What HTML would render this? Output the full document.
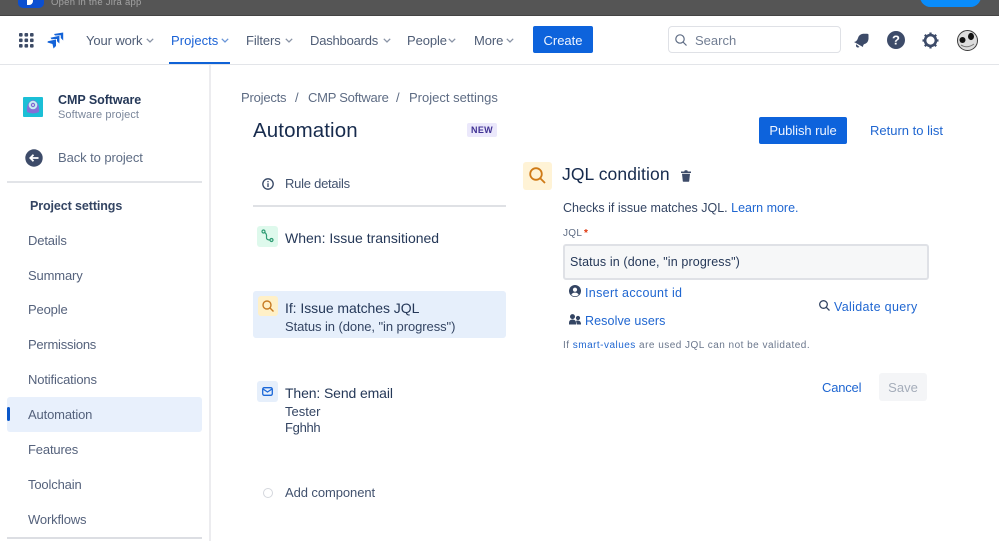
<!DOCTYPE html>
<html lang="en">
<head>
<meta charset="utf-8">
<style>
html,body{margin:0;padding:0;background:#fff}
body{width:999px;height:541px;overflow:hidden;position:relative;font-family:"Liberation Sans",sans-serif;color:#42526e}
.t{position:absolute;white-space:nowrap;line-height:20px;font-size:13px;letter-spacing:0}
.b{position:absolute}
.nav{color:#4f5d76;font-size:13px;letter-spacing:-.1px;top:31px}
.side{color:#55627c;left:28px;font-size:13px;letter-spacing:-.15px}
.link{color:#1f66d1}
svg{position:absolute;overflow:visible}
</style>
</head>
<body>
<!-- top banner -->
<div class="b" style="left:0;top:0;width:999px;height:15px;background:#555555;border-bottom:1px solid #444"></div>
<div class="b" style="left:18px;top:-12px;width:26px;height:20px;background:#0b4fd0;border-radius:5px"></div>
<div class="b" style="left:27px;top:-4px;width:6px;height:9px;background:#fff;border-radius:0 0 4px 0"></div>
<div class="t" style="left:51px;top:-7px;font-size:9.5px;color:#a3a3a3;letter-spacing:.25px">Open in the Jira app</div>
<div class="b" style="left:920px;top:-14px;width:61px;height:21px;background:#0a8cfa;border-radius:11px"></div>

<!-- header -->
<div class="b" style="left:0;top:64px;width:999px;height:1px;background:#e3e5e9"></div>
<svg style="left:19px;top:33px" width="15" height="15" fill="#3d4b66">
<rect x="0" y="0" width="3.6" height="3.6" rx="1"/><rect x="5.5" y="0" width="3.6" height="3.6" rx="1"/><rect x="11" y="0" width="3.6" height="3.6" rx="1"/>
<rect x="0" y="5.5" width="3.6" height="3.6" rx="1"/><rect x="5.5" y="5.5" width="3.6" height="3.6" rx="1"/><rect x="11" y="5.5" width="3.6" height="3.6" rx="1"/>
<rect x="0" y="11" width="3.6" height="3.6" rx="1"/><rect x="5.5" y="11" width="3.6" height="3.6" rx="1"/><rect x="11" y="11" width="3.6" height="3.6" rx="1"/>
</svg>
<svg style="left:47px;top:32px" width="17" height="17" viewBox="0 0 17 17" fill="#1463d8">
<path d="M16.200 .5V8.500L13.800 6V3.300L8 3.500 7 2 Z"/>
<path d="M12.400 3.800V11.500L10 9.200V7L4.500 7.200 3.500 5.800Z"/>
<path d="M9 7.500V14L6.500 16.500 5.500 12 .5 10.500 .8 9.300Z"/>
</svg>
<div class="t nav" style="left:86px">Your work</div>
<svg style="left:146px;top:38px" width="8" height="5" fill="none" stroke="#8a94a6" stroke-width="1.3"><path d="M.8 .8 4 4 7.2 .8"/></svg>
<div class="t nav" style="left:171px;color:#1a62d6;letter-spacing:.05px">Projects</div>
<svg style="left:221px;top:38px" width="8" height="5" fill="none" stroke="#6a96d8" stroke-width="1.3"><path d="M.8 .8 4 4 7.2 .8"/></svg>
<div class="b" style="left:169px;top:62px;width:61px;height:2px;background:#0f62d6"></div>
<div class="t nav" style="left:246px">Filters</div>
<svg style="left:285px;top:38px" width="8" height="5" fill="none" stroke="#8a94a6" stroke-width="1.3"><path d="M.8 .8 4 4 7.2 .8"/></svg>
<div class="t nav" style="left:310px;letter-spacing:-.2px">Dashboards</div>
<svg style="left:383px;top:38px" width="8" height="5" fill="none" stroke="#8a94a6" stroke-width="1.3"><path d="M.8 .8 4 4 7.2 .8"/></svg>
<div class="t nav" style="left:407px">People</div>
<svg style="left:448px;top:38px" width="8" height="5" fill="none" stroke="#8a94a6" stroke-width="1.3"><path d="M.8 .8 4 4 7.2 .8"/></svg>
<div class="t nav" style="left:474px">More</div>
<svg style="left:506px;top:38px" width="8" height="5" fill="none" stroke="#8a94a6" stroke-width="1.3"><path d="M.8 .8 4 4 7.2 .8"/></svg>
<div class="b" style="left:533px;top:26px;width:60px;height:27px;background:#0d63dc;border-radius:2px"></div>
<div class="t" style="left:533px;top:31px;width:60px;text-align:center;color:#eef4ff">Create</div>

<div class="b" style="left:668px;top:26px;width:171px;height:25px;border:1.5px solid #dfe1e6;border-radius:4px;background:#fff"></div>
<svg style="left:675px;top:34px" width="12" height="12" fill="none" stroke="#5e6c84" stroke-width="1.2"><circle cx="5" cy="5" r="4.200"/><path d="M8 8 11.500 11.500"/></svg>
<div class="t" style="left:695px;top:31px;color:#727e93">Search</div>
<svg style="left:854px;top:33px" width="15" height="15" viewBox="0 0 15 15" fill="#3d4b69">
<path d="M0 9Q3 8.500 4 5Q5 1.500 9 .8L13 .8Q14.500 .8 14.500 2L14.500 6Q14 10 10.500 11Q9 11.500 9 14Z"/>
<path d="M2.300 11.300L5.500 14Q3.500 15 2.500 14Q1.600 13 2.300 11.300Z"/>
</svg>
<svg style="left:887px;top:31px" width="18" height="18"><circle cx="9" cy="9" r="9" fill="#3d4b69"/><text x="9" y="13.5" text-anchor="middle" font-size="13" font-weight="700" fill="#fff" font-family="Liberation Sans">?</text></svg>
<svg style="left:922px;top:32px" width="17" height="17" viewBox="0 0 17 17" fill="none" stroke="#3d4b69">
<circle cx="8.500" cy="8.500" r="5.400" stroke-width="2.600"/><path d="M8.500 .5V3M8.500 14V16.500M.5 8.500H3M14 8.500H16.500M2.800 2.800 4.600 4.600M12.400 12.400 14.200 14.200M14.200 2.800 12.400 4.600M4.600 12.400 2.800 14.200" stroke-width="2.200"/>
</svg>
<svg style="left:957px;top:30px" width="21" height="21">
<circle cx="10.500" cy="10.500" r="10" fill="#dcdcdc" stroke="#3a3a3a" stroke-width="1"/>
<ellipse cx="5.500" cy="10" rx="3" ry="3" fill="#111"/><ellipse cx="14" cy="6.500" rx="3" ry="3.600" fill="#111"/>
<path d="M4 15 Q10 19 17 14" stroke="#777" fill="none"/>
</svg>

<!-- sidebar -->
<div class="b" style="left:209px;top:65px;width:2px;height:476px;background:#ececef"></div>
<svg style="left:23px;top:97px" width="20" height="20">
<rect width="20" height="20" rx="1" fill="#1bbfd6"/>
<path d="M4 15 Q3 5 10 3 Q17 5 16 15 Q10 18 4 15Z" fill="#8470d8"/>
<circle cx="10" cy="8" r="4.300" fill="#c8eef2"/><circle cx="10" cy="8" r="2.200" fill="#7e6bd0"/><circle cx="10" cy="8" r=".9" fill="#fff"/>
</svg>
<div class="t" style="left:58px;top:90px;color:#253858;font-weight:700;font-size:12.500px;letter-spacing:-.05px">CMP Software</div>
<div class="t" style="left:58px;top:105px;color:#7a869a;font-size:11px;letter-spacing:.1px">Software project</div>
<svg style="left:25px;top:149px" width="18" height="18"><circle cx="9" cy="9" r="8.700" fill="#3d4b69"/><path d="M13.500 9H5.500M8.500 5.800 5.300 9 8.500 12.200" stroke="#fff" stroke-width="1.800" fill="none"/></svg>
<div class="t" style="left:58px;top:148px;color:#5e6c84;letter-spacing:-.08px">Back to project</div>
<div class="b" style="left:7px;top:181px;width:195px;height:2px;background:#e2e4e8"></div>
<div class="t" style="left:30px;top:196px;color:#344563;font-weight:700;font-size:12.500px;letter-spacing:-.1px">Project settings</div>
<div class="t side" style="top:231px">Details</div>
<div class="t side" style="top:265.500px">Summary</div>
<div class="t side" style="top:300px">People</div>
<div class="t side" style="top:335px;letter-spacing:-.25px">Permissions</div>
<div class="t side" style="top:370px">Notifications</div>
<div class="b" style="left:7px;top:397px;width:195px;height:35px;background:#e8f0fc;border-radius:3px"></div>
<div class="b" style="left:7px;top:407px;width:3px;height:14px;background:#0b57c9;border-radius:2px"></div>
<div class="t side" style="top:405px">Automation</div>
<div class="t side" style="top:440px">Features</div>
<div class="t side" style="top:475px">Toolchain</div>
<div class="t side" style="top:509.500px">Workflows</div>
<div class="b" style="left:7px;top:537px;width:195px;height:2px;background:#dcdee3"></div>

<!-- main head -->
<div class="t" style="left:241px;top:88px;color:#5e6c84;letter-spacing:-.2px">Projects</div>
<div class="t" style="left:295px;top:88px;color:#5e6c84">/</div>
<div class="t" style="left:308px;top:88px;color:#5e6c84;letter-spacing:-.25px">CMP Software</div>
<div class="t" style="left:396px;top:88px;color:#5e6c84">/</div>
<div class="t" style="left:409px;top:88px;color:#5e6c84">Project settings</div>
<div class="t" style="left:253px;top:120px;color:#172b4d;font-size:20.500px;line-height:22px;letter-spacing:.1px">Automation</div>
<div class="b" style="left:467px;top:123px;width:30px;height:14px;background:#ebe8fb;border-radius:2px"></div>
<div class="t" style="left:467px;top:120px;width:30px;text-align:center;color:#403294;font-size:9px;font-weight:700;letter-spacing:.3px">NEW</div>
<div class="b" style="left:759px;top:117px;width:88px;height:27px;background:#0d63dc;border-radius:2px"></div>
<div class="t" style="left:759px;top:121px;width:88px;text-align:center;color:#eef4ff;letter-spacing:-.05px">Publish rule</div>
<div class="t link" style="left:870px;top:121px">Return to list</div>

<!-- rule steps -->
<svg style="left:262px;top:178px" width="12" height="12" fill="none" stroke="#344563" stroke-width="1.300"><circle cx="6" cy="6" r="5.200"/><path d="M6 5.300V9M6 3V4.200"/></svg>
<div class="t" style="left:285px;top:174px;color:#42526e;letter-spacing:-.25px">Rule details</div>
<div class="b" style="left:253px;top:205px;width:253px;height:2px;background:#dfe1e5"></div>

<div class="b" style="left:257px;top:226px;width:21px;height:21px;background:#def9ec;border-radius:3px"></div>
<svg style="left:261px;top:229px" width="13" height="14" fill="none" stroke="#2c9a72" stroke-width="1.200"><circle cx="2.500" cy="2.500" r="1.500"/><circle cx="10.500" cy="11" r="1.500"/><path d="M3.800 3.500Q6 5 5.500 8T9 11"/></svg>
<div class="t" style="left:285px;top:228px;color:#253858;font-size:14px">When: Issue transitioned</div>

<div class="b" style="left:253px;top:291px;width:253px;height:47px;background:#e6effb;border-radius:3px"></div>
<div class="b" style="left:258px;top:296px;width:20px;height:20px;background:#fff0c7;border-radius:3px"></div>
<svg style="left:262px;top:300px" width="12" height="12" fill="none" stroke="#c77a22" stroke-width="1.400"><circle cx="5" cy="5" r="4"/><path d="M8 8 11.500 11.500"/></svg>
<div class="t" style="left:285px;top:297.500px;color:#253858;font-size:14px;letter-spacing:-.05px">If: Issue matches JQL</div>
<div class="t" style="left:285px;top:316.500px;color:#344563;letter-spacing:-.07px">Status in (done, "in progress")</div>

<div class="b" style="left:257px;top:381px;width:21px;height:21px;background:#e6effb;border-radius:3px"></div>
<svg style="left:262px;top:387px" width="11" height="9" fill="none" stroke="#1c68d8" stroke-width="1.300"><rect x=".7" y=".7" width="9.600" height="7.600" rx="1.500"/><path d="M1 2 5.500 5 10 2"/></svg>
<div class="t" style="left:285px;top:383px;color:#253858;font-size:14px;letter-spacing:-.12px">Then: Send email</div>
<div class="t" style="left:285px;top:402px;color:#344563">Tester</div>
<div class="t" style="left:285px;top:417.500px;color:#344563;letter-spacing:-.3px">Fghhh</div>

<div class="b" style="left:263px;top:488px;width:8px;height:8px;border:1.500px solid #d4d7dd;border-radius:50%;background:#fff"></div>
<div class="t" style="left:285px;top:483px;color:#42526e;letter-spacing:-.08px">Add component</div>

<!-- right panel -->
<div class="b" style="left:523px;top:162px;width:29px;height:28px;background:#fff3d6;border-radius:3px"></div>
<svg style="left:529px;top:167px" width="17" height="17" fill="none" stroke="#cf7a16" stroke-width="1.800"><circle cx="7" cy="7" r="5.800"/><path d="M11.200 11.200 16 16"/></svg>
<div class="t" style="left:562px;top:163px;color:#172b4d;font-size:17.500px;line-height:22px;letter-spacing:.1px">JQL condition</div>
<svg style="left:681px;top:170px" width="10" height="12" fill="#3d4b69"><path d="M0 1.500H3.200L3.800 .3H6.200L6.800 1.500H10V3H0Z"/><path d="M1 3.800H9L8.200 11.300Q8.100 11.800 7.500 11.800H2.500Q1.900 11.800 1.800 11.300Z"/></svg>

<div class="t" style="left:563px;top:198px;color:#344563;font-size:12.500px">Checks if issue matches JQL. <span class="link">Learn more.</span></div>
<div class="t" style="left:563px;top:224px;color:#5e6c84;font-size:10px;letter-spacing:.3px">JQL <span style="color:#de350b;font-weight:700;margin-left:-1px">*</span></div>
<div class="b" style="left:563px;top:244px;width:362px;height:32px;background:#f6f7f8;border:2px solid #dfe1e6;border-radius:3px"></div>
<div class="t" style="left:570px;top:252px;color:#253858;font-size:12.500px;letter-spacing:.13px">Status in (done, "in progress")</div>

<svg style="left:569px;top:285px" width="12" height="12"><circle cx="6" cy="6" r="6" fill="#344563"/><circle cx="6" cy="4.700" r="2.100" fill="#fff"/><path d="M2.300 10Q3 7.600 6 7.600T9.700 10Q6 12.500 2.300 10Z" fill="#fff"/></svg>
<div class="t link" style="left:585px;top:283px;font-size:12.500px;letter-spacing:.33px">Insert account id</div>
<svg style="left:569px;top:314px" width="12" height="11" fill="#344563"><circle cx="3.500" cy="2.600" r="2.500"/><circle cx="9" cy="4" r="2.100"/><path d="M0 10.500V9Q0 5.500 3.500 5.500T7 9V10.500Z"/><path d="M7 6.700Q12 5.500 12 10.500H7.800Z"/></svg>
<div class="t link" style="left:585px;top:311px;font-size:12.500px;letter-spacing:.1px">Resolve users</div>
<svg style="left:819px;top:300px" width="11" height="11" fill="none" stroke="#344563" stroke-width="1.300"><circle cx="4.500" cy="4.500" r="3.800"/><path d="M7.300 7.300 10.500 10.500"/></svg>
<div class="t link" style="left:834px;top:297px;font-size:12.500px;letter-spacing:.33px">Validate query</div>
<div class="t" style="left:563px;top:336px;color:#6b778c;font-size:10px;letter-spacing:.48px">If <span class="link">smart-values</span> are used JQL can not be validated.</div>
<div class="t link" style="left:822px;top:378px;letter-spacing:-.2px">Cancel</div>
<div class="b" style="left:879px;top:373px;width:48px;height:28px;background:#f4f5f7;border-radius:3px"></div>
<div class="t" style="left:879px;top:378px;width:48px;text-align:center;color:#a5adba">Save</div>
</body>
</html>
